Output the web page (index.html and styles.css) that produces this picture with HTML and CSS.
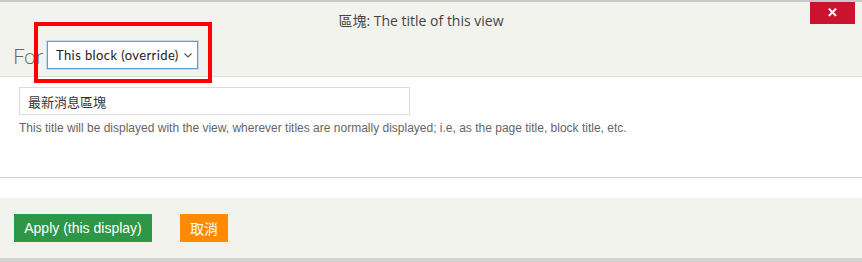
FILE: index.html
```html
<!DOCTYPE html>
<html lang="zh-Hant">
<head>
    <meta charset="UTF-8">
    <meta name="viewport" content="width=device-width, initial-scale=1.0">
    <title>區塊: The title of this view</title>
    <link rel="stylesheet" href="styles.css">
</head>
<body>
    <div class="dialog">
        <div class="dialog-header">
            <div class="title-row">
                <h1 class="dialog-title">區塊: The title of this view</h1>
            </div>
            <button class="close-btn" title="Close">&#x2715;</button>
            <div class="for-row">
                <span class="for-label">For</span>
                <div class="select-box">
                    <span>This block (override)</span>
                    <svg class="chevron" width="8" height="5" viewBox="0 0 8 5">
                        <path d="M0.5 0.5 L4 4 L7.5 0.5" fill="none" stroke="#555" stroke-width="1.2"/>
                    </svg>
                </div>
            </div>
        </div>

        <div class="dialog-body">
            <input type="text" class="title-input" value="最新消息區塊">
            <div class="description">This title will be displayed with the view, wherever titles are normally displayed; i.e, as the page title, block title, etc.</div>
        </div>

        <div class="dialog-footer">
            <button class="btn btn-apply">Apply (this display)</button>
            <button class="btn btn-cancel">取消</button>
        </div>

        <div class="highlight"></div>
    </div>
</body>
</html>
```

FILE: styles.css
```css
body {
    margin: 0;
    padding: 0;
    background-color: #fff;
    font-family: "Liberation Sans", Arial, "Noto Sans CJK TC", sans-serif;
}

.dialog {
    position: relative;
    width: 862px;
    height: 262px;
    border-top: 2px solid #c8c8c8;
    box-sizing: border-box;
    background-color: #fff;
}

.dialog-header {
    position: relative;
    height: 74px;
    background-color: #f3f3ee;
    border-bottom: 1px solid #dcdcdc;
}

.title-row {
    display: flex;
    justify-content: center;
    padding: 9px 20px 0 0;
}

.dialog-title {
    margin: 0;
    font-family: "Open Sans", "Noto Sans CJK TC", sans-serif;
    font-size: 14px;
    font-weight: normal;
    line-height: 20px;
    color: #444;
}

.close-btn {
    position: absolute;
    top: 0;
    right: 7px;
    width: 45px;
    height: 22px;
    border: none;
    padding: 0;
    background-color: #c9132f;
    color: #fff;
    font-size: 13px;
    font-weight: bold;
    line-height: 22px;
    cursor: pointer;
}

.for-row {
    display: flex;
    align-items: center;
    padding: 10px 0 0 13px;
}

.for-label {
    font-family: "Lato", "Open Sans", sans-serif;
    font-weight: 300;
    font-size: 21px;
    color: #666;
    width: 34px;
}

.select-box {
    display: flex;
    align-items: center;
    justify-content: space-between;
    width: 151px;
    height: 28px;
    box-sizing: border-box;
    padding: 0 5px 0 8px;
    border: 1px solid #5b9dd9;
    box-shadow: 0 0 0 1px #c3dcf3;
    background-color: #fff;
    font-family: "Lato", "Open Sans", sans-serif;
    font-size: 13px;
    letter-spacing: 0.4px;
    color: #222;
}

.chevron {
    display: block;
}

.dialog-body {
    padding: 10px 19px 0;
    height: 90px;
    border-bottom: 1px solid #cfcfcf;
}

.title-input {
    display: block;
    width: 391px;
    height: 28px;
    box-sizing: border-box;
    margin: 0;
    padding: 0 8px;
    border: 1px solid #dcdcdc;
    font-family: "Liberation Sans", "Noto Sans CJK TC", sans-serif;
    font-size: 13px;
    color: #333;
    outline: none;
}

.description {
    margin-top: 6px;
    font-size: 12px;
    line-height: 14px;
    color: #666;
}

.dialog-footer {
    display: flex;
    gap: 28px;
    margin-top: 20px;
    padding: 16px 14px;
    height: 28px;
    background-color: #f3f3ee;
    border-bottom: 4px solid #d2d2d2;
}

.btn {
    height: 28px;
    border: none;
    padding: 0 10px;
    font-family: "Liberation Sans", "Noto Sans CJK TC", sans-serif;
    font-size: 14px;
    color: #fff;
    cursor: pointer;
}

.btn-apply {
    width: 138px;
    background-color: #2e9647;
}

.btn-cancel {
    width: 48px;
    background-color: #ff8a00;
}

.highlight {
    position: absolute;
    left: 34px;
    top: 20px;
    width: 178px;
    height: 61px;
    box-sizing: border-box;
    border: 4px solid #ff0000;
}
```
